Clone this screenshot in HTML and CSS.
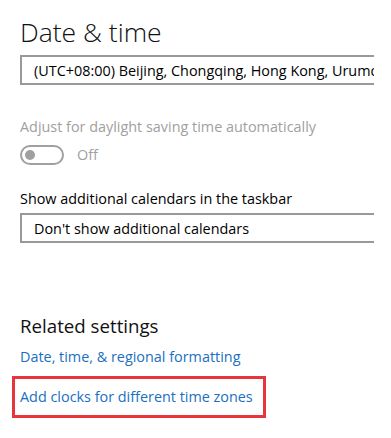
FILE: index.html
```html
<!DOCTYPE html>
<html lang="en">
<head>
<meta charset="utf-8">
<title>Date &amp; time</title>
<link rel="stylesheet" href="styles.css">
</head>
<body>
<main class="page">
  <h1 class="title">Date &amp; time</h1>
  <div class="select select-tz"><span class="select-text">(UTC+08:00) Beijing, Chongqing, Hong Kong, Urumqi</span></div>

  <div class="label label-disabled">Adjust for daylight saving time automatically</div>
  <div class="toggle-row">
    <span class="toggle"><span class="knob"></span></span>
    <span class="toggle-text">Off</span>
  </div>

  <div class="label label-calendars">Show additional calendars in the taskbar</div>
  <div class="select select-cal"><span class="select-text">Don't show additional calendars</span></div>

  <h2 class="section">Related settings</h2>
  <a class="link link-format" href="#">Date, time, &amp; regional formatting</a>
  <div class="highlight"><a class="link" href="#">Add clocks for different time zones</a></div>
</main>
</body>
</html>
```

FILE: styles.css
```css
html, body {
  margin: 0;
  padding: 0;
  background: #ffffff;
}

body {
  font-family: "Open Sans", "Noto Sans", sans-serif;
  color: #000000;
  width: 391px;
  height: 438px;
  overflow: hidden;
}

.page {
  padding: 14px 0 0 20px;
  display: flex;
  flex-direction: column;
  align-items: flex-start;
}

.title {
  margin: 0;
  font-size: 26.5px;
  line-height: 36px;
  font-weight: 300;
  color: #111111;
}

.select {
  box-sizing: border-box;
  width: 354px;
  height: 30px;
  border: 2px solid #999999;
  border-right: none;
  overflow: hidden;
  white-space: nowrap;
  display: flex;
  align-items: center;
  padding-left: 12px;
  font-size: 14.4px;
  color: #000000;
}

.select-tz {
  margin-top: 5px;
}

.select-cal {
  margin-top: 4px;
}

.label {
  font-size: 14.4px;
  line-height: 20px;
}

.label-disabled {
  margin-top: 32px;
  color: #a0a0a0;
}

.toggle-row {
  margin-top: 8px;
  display: flex;
  align-items: center;
  gap: 13px;
}

.toggle {
  box-sizing: border-box;
  width: 44px;
  height: 20px;
  border: 2px solid #a0a0a0;
  border-radius: 10px;
  display: flex;
  align-items: center;
  padding-left: 3px;
}

.knob {
  width: 10px;
  height: 10px;
  border-radius: 50%;
  background: #a0a0a0;
}

.toggle-text {
  font-size: 14.4px;
  line-height: 20px;
  color: #a0a0a0;
}

.label-calendars {
  margin-top: 24px;
}

.section {
  margin: 70px 0 0 0;
  font-size: 18.7px;
  line-height: 26px;
  font-weight: 400;
  color: #111111;
}

.link {
  font-size: 14.4px;
  line-height: 20px;
  color: #1a6fc0;
  text-decoration: none;
}

.link-format {
  margin-top: 8px;
}

.highlight {
  margin: 9px 0 0 -8px;
  border: 3px solid #e8353b;
  padding: 8px 10px 8px 5px;
  display: flex;
}
```
